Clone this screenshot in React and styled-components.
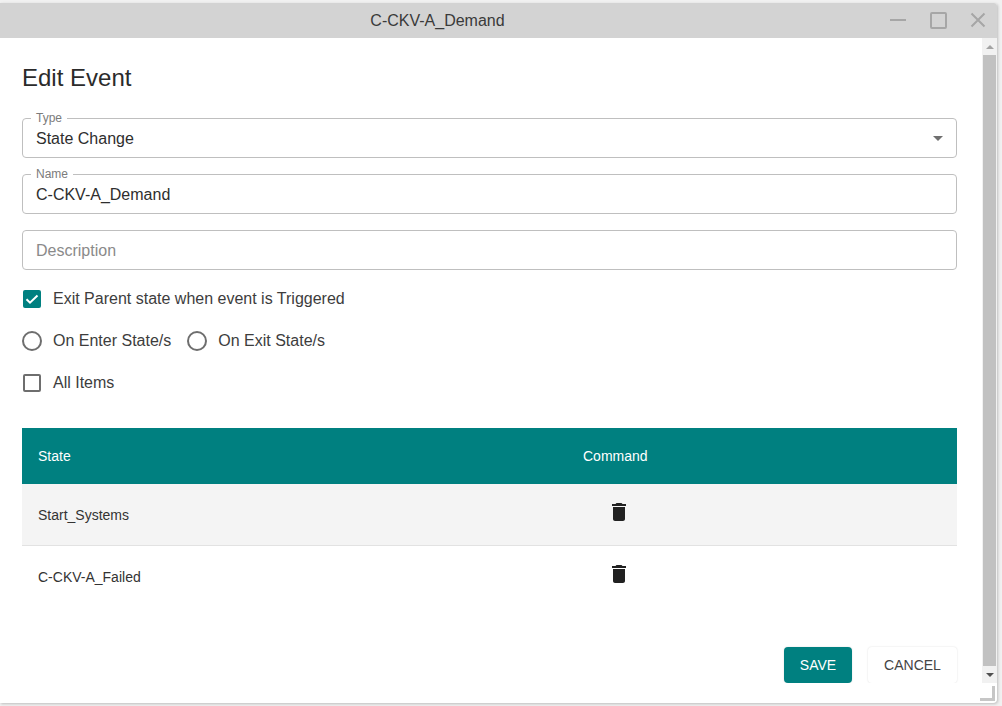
import React from "react";
import styled, { createGlobalStyle } from "styled-components";
import { MdDelete } from "react-icons/md";

const GlobalStyle = createGlobalStyle`
  html, body {
    margin: 0;
    height: 100%;
    overflow: hidden;
    background: #f1f1f1;
    font-family: "Liberation Sans", Arial, sans-serif;
  }
  * { box-sizing: border-box; }
`;

const Stage = styled.div`
  width: 1002px;
  height: 706px;
  padding: 3px 5px 3px 0;
`;

const Win = styled.div`
  position: relative;
  width: 997px;
  height: 700px;
  display: flex;
  flex-direction: column;
  background: #fff;
  border-radius: 0 3px 4px 0;
  box-shadow: 1px 1px 3px rgba(0, 0, 0, 0.22);
  overflow: hidden;
`;

const TitleBar = styled.div`
  flex: 0 0 35px;
  display: flex;
  align-items: center;
  background: #d3d3d3;
`;

const TitleText = styled.div`
  flex: 1;
  text-align: center;
  font-size: 16px;
  color: #3a3a3a;
`;

const Controls = styled.div`
  flex: 0 0 122px;
  display: flex;
  align-items: center;
  padding-left: 15px;
  gap: 23px;
`;

const Main = styled.div`
  flex: 0 0 645px;
  display: flex;
  overflow: hidden;
`;

const Content = styled.div`
  flex: 1;
  min-width: 0;
  padding: 0 25px 0 22px;
`;

const Heading = styled.h2`
  margin: 0;
  padding-top: 26px;
  height: 80px;
  font-size: 24px;
  line-height: 28px;
  font-weight: 400;
  color: #2b2b2b;
`;

const Fields = styled.div`
  display: flex;
  flex-direction: column;
  gap: 16px;
`;

const Field = styled.div`
  position: relative;
  height: 40px;
  display: flex;
  align-items: center;
  justify-content: space-between;
  padding: 2px 13px 0 13px;
  border: 1px solid #bfbfbf;
  border-radius: 4px;
  font-size: 16px;
  color: ${(p) => (p.$placeholder ? "#8a8a8a" : "#2e2e2e")};
`;

const FieldLabel = styled.span`
  position: absolute;
  left: 8px;
  top: -8px;
  padding: 0 5px;
  background: #fff;
  font-size: 12px;
  line-height: 14px;
  color: #7b7b7b;
`;

const Caret = styled.span`
  width: 0;
  height: 0;
  margin-top: -1px;
  border-left: 5px solid transparent;
  border-right: 5px solid transparent;
  border-top: 5px solid #6f6f6f;
`;

const Options = styled.div`
  display: flex;
  flex-direction: column;
  padding-top: 8px;
`;

const OptionRow = styled.div`
  height: 42px;
  display: flex;
  align-items: center;
  gap: 16px;
`;

const Option = styled.label`
  display: flex;
  align-items: center;
  gap: 11px;
  font-size: 16px;
  color: #3d3d3d;
`;

const CheckBox = styled.span`
  width: 18px;
  height: 18px;
  margin-left: 1px;
  margin-right: 1px;
  display: flex;
  align-items: center;
  justify-content: center;
  border-radius: 2px;
  border: ${(p) => (p.$checked ? "none" : "2px solid #6e6e6e")};
  background: ${(p) => (p.$checked ? "#008080" : "#fff")};
`;

const Radio = styled.span`
  width: 20px;
  height: 20px;
  border-radius: 50%;
  border: 2px solid #6e6e6e;
`;

const EventsTable = styled.table`
  width: 100%;
  margin-top: 24px;
  border-collapse: collapse;
  table-layout: fixed;
`;

const HeadCell = styled.th`
  height: 56px;
  padding: 0 16px;
  background: #008080;
  color: #fff;
  font-size: 14px;
  font-weight: 400;
  text-align: left;
  width: ${(p) => p.$width || "auto"};
`;

const Row = styled.tr`
  height: ${(p) => p.$height}px;
  background: ${(p) => (p.$shaded ? "#f4f4f4" : "#fff")};
  border-bottom: ${(p) => (p.$shaded ? "1px solid #e2e2e2" : "none")};
`;

const Cell = styled.td`
  padding: 2px 16px 0;
  font-size: 14px;
  color: #333;
`;

const TrashCell = styled.td`
  padding: 0 0 0 40px;
  vertical-align: top;
`;

const Trash = styled(MdDelete)`
  display: block;
  margin-top: 16px;
  color: #212121;
`;

const Actions = styled.div`
  display: flex;
  justify-content: flex-end;
  gap: 16px;
  margin-top: 40px;
`;

const Button = styled.button`
  height: 36px;
  padding: 0;
  width: ${(p) => p.$width}px;
  border: none;
  border-radius: 4px;
  font-family: inherit;
  font-size: 14px;
  text-transform: uppercase;
  color: ${(p) => (p.$primary ? "#fff" : "#444")};
  background: ${(p) => (p.$primary ? "#008080" : "#fff")};
  box-shadow: 0 0 2px rgba(0, 0, 0, 0.14);
`;

const ScrollBar = styled.div`
  flex: 0 0 15px;
  display: flex;
  flex-direction: column;
  align-items: center;
  background: #f1f1f1;
`;

const ScrollArrow = styled.div`
  flex: 0 0 17px;
  display: flex;
  align-items: center;
  justify-content: center;
`;

const ArrowUp = styled.span`
  width: 0;
  height: 0;
  border-left: 4px solid transparent;
  border-right: 4px solid transparent;
  border-bottom: 4px solid #a3a3a3;
`;

const ArrowDown = styled.span`
  width: 0;
  height: 0;
  border-left: 4px solid transparent;
  border-right: 4px solid transparent;
  border-top: 4px solid #505050;
`;

const ScrollThumb = styled.div`
  flex: 1;
  width: 13px;
  background: #c1c1c1;
`;

const ResizeGrip = styled.div`
  position: absolute;
  right: 2px;
  bottom: 2px;
  width: 15px;
  height: 15px;
  border-right: 3px solid #c6c6c6;
  border-bottom: 3px solid #c6c6c6;
`;

function WindowIcon({ kind }) {
  return (
    <svg width="17" height="17" viewBox="0 0 17 17" fill="none" stroke="#a6a6a6" strokeWidth="2">
      {kind === "min" && <path d="M0 8h16" />}
      {kind === "max" && <rect x="1" y="1" width="15" height="15" rx="1" />}
      {kind === "close" && <path d="M1.5 1.5l13 13M14.5 1.5l-13 13" />}
    </svg>
  );
}

export default function App() {
  return (
    <Stage>
      <GlobalStyle />
      <Win>
        <TitleBar>
          <TitleText>C-CKV-A_Demand</TitleText>
          <Controls>
            <WindowIcon kind="min" />
            <WindowIcon kind="max" />
            <WindowIcon kind="close" />
          </Controls>
        </TitleBar>
        <Main>
          <Content>
            <Heading>Edit Event</Heading>
            <Fields>
              <Field>
                <FieldLabel>Type</FieldLabel>
                State Change
                <Caret />
              </Field>
              <Field>
                <FieldLabel>Name</FieldLabel>
                C-CKV-A_Demand
              </Field>
              <Field $placeholder>Description</Field>
            </Fields>
            <Options>
              <OptionRow>
                <Option>
                  <CheckBox $checked>
                    <svg width="18" height="18" viewBox="0 0 18 18" fill="none" stroke="#fff" strokeWidth="2">
                      <path d="M3.5 9.2L7 12.7 14.5 5.5" />
                    </svg>
                  </CheckBox>
                  Exit Parent state when event is Triggered
                </Option>
              </OptionRow>
              <OptionRow>
                <Option>
                  <Radio />
                  On Enter State/s
                </Option>
                <Option>
                  <Radio />
                  On Exit State/s
                </Option>
              </OptionRow>
              <OptionRow>
                <Option>
                  <CheckBox />
                  All Items
                </Option>
              </OptionRow>
            </Options>
            <EventsTable>
              <thead>
                <tr>
                  <HeadCell $width="545px">State</HeadCell>
                  <HeadCell>Command</HeadCell>
                </tr>
              </thead>
              <tbody>
                <Row $height={61} $shaded>
                  <Cell>Start_Systems</Cell>
                  <TrashCell>
                    <Trash size={24} />
                  </TrashCell>
                </Row>
                <Row $height={62}>
                  <Cell>C-CKV-A_Failed</Cell>
                  <TrashCell>
                    <Trash size={24} />
                  </TrashCell>
                </Row>
              </tbody>
            </EventsTable>
            <Actions>
              <Button $primary $width={68}>Save</Button>
              <Button $width={89}>Cancel</Button>
            </Actions>
          </Content>
          <ScrollBar>
            <ScrollArrow><ArrowUp /></ScrollArrow>
            <ScrollThumb />
            <ScrollArrow><ArrowDown /></ScrollArrow>
          </ScrollBar>
        </Main>
        <ResizeGrip />
      </Win>
    </Stage>
  );
}
